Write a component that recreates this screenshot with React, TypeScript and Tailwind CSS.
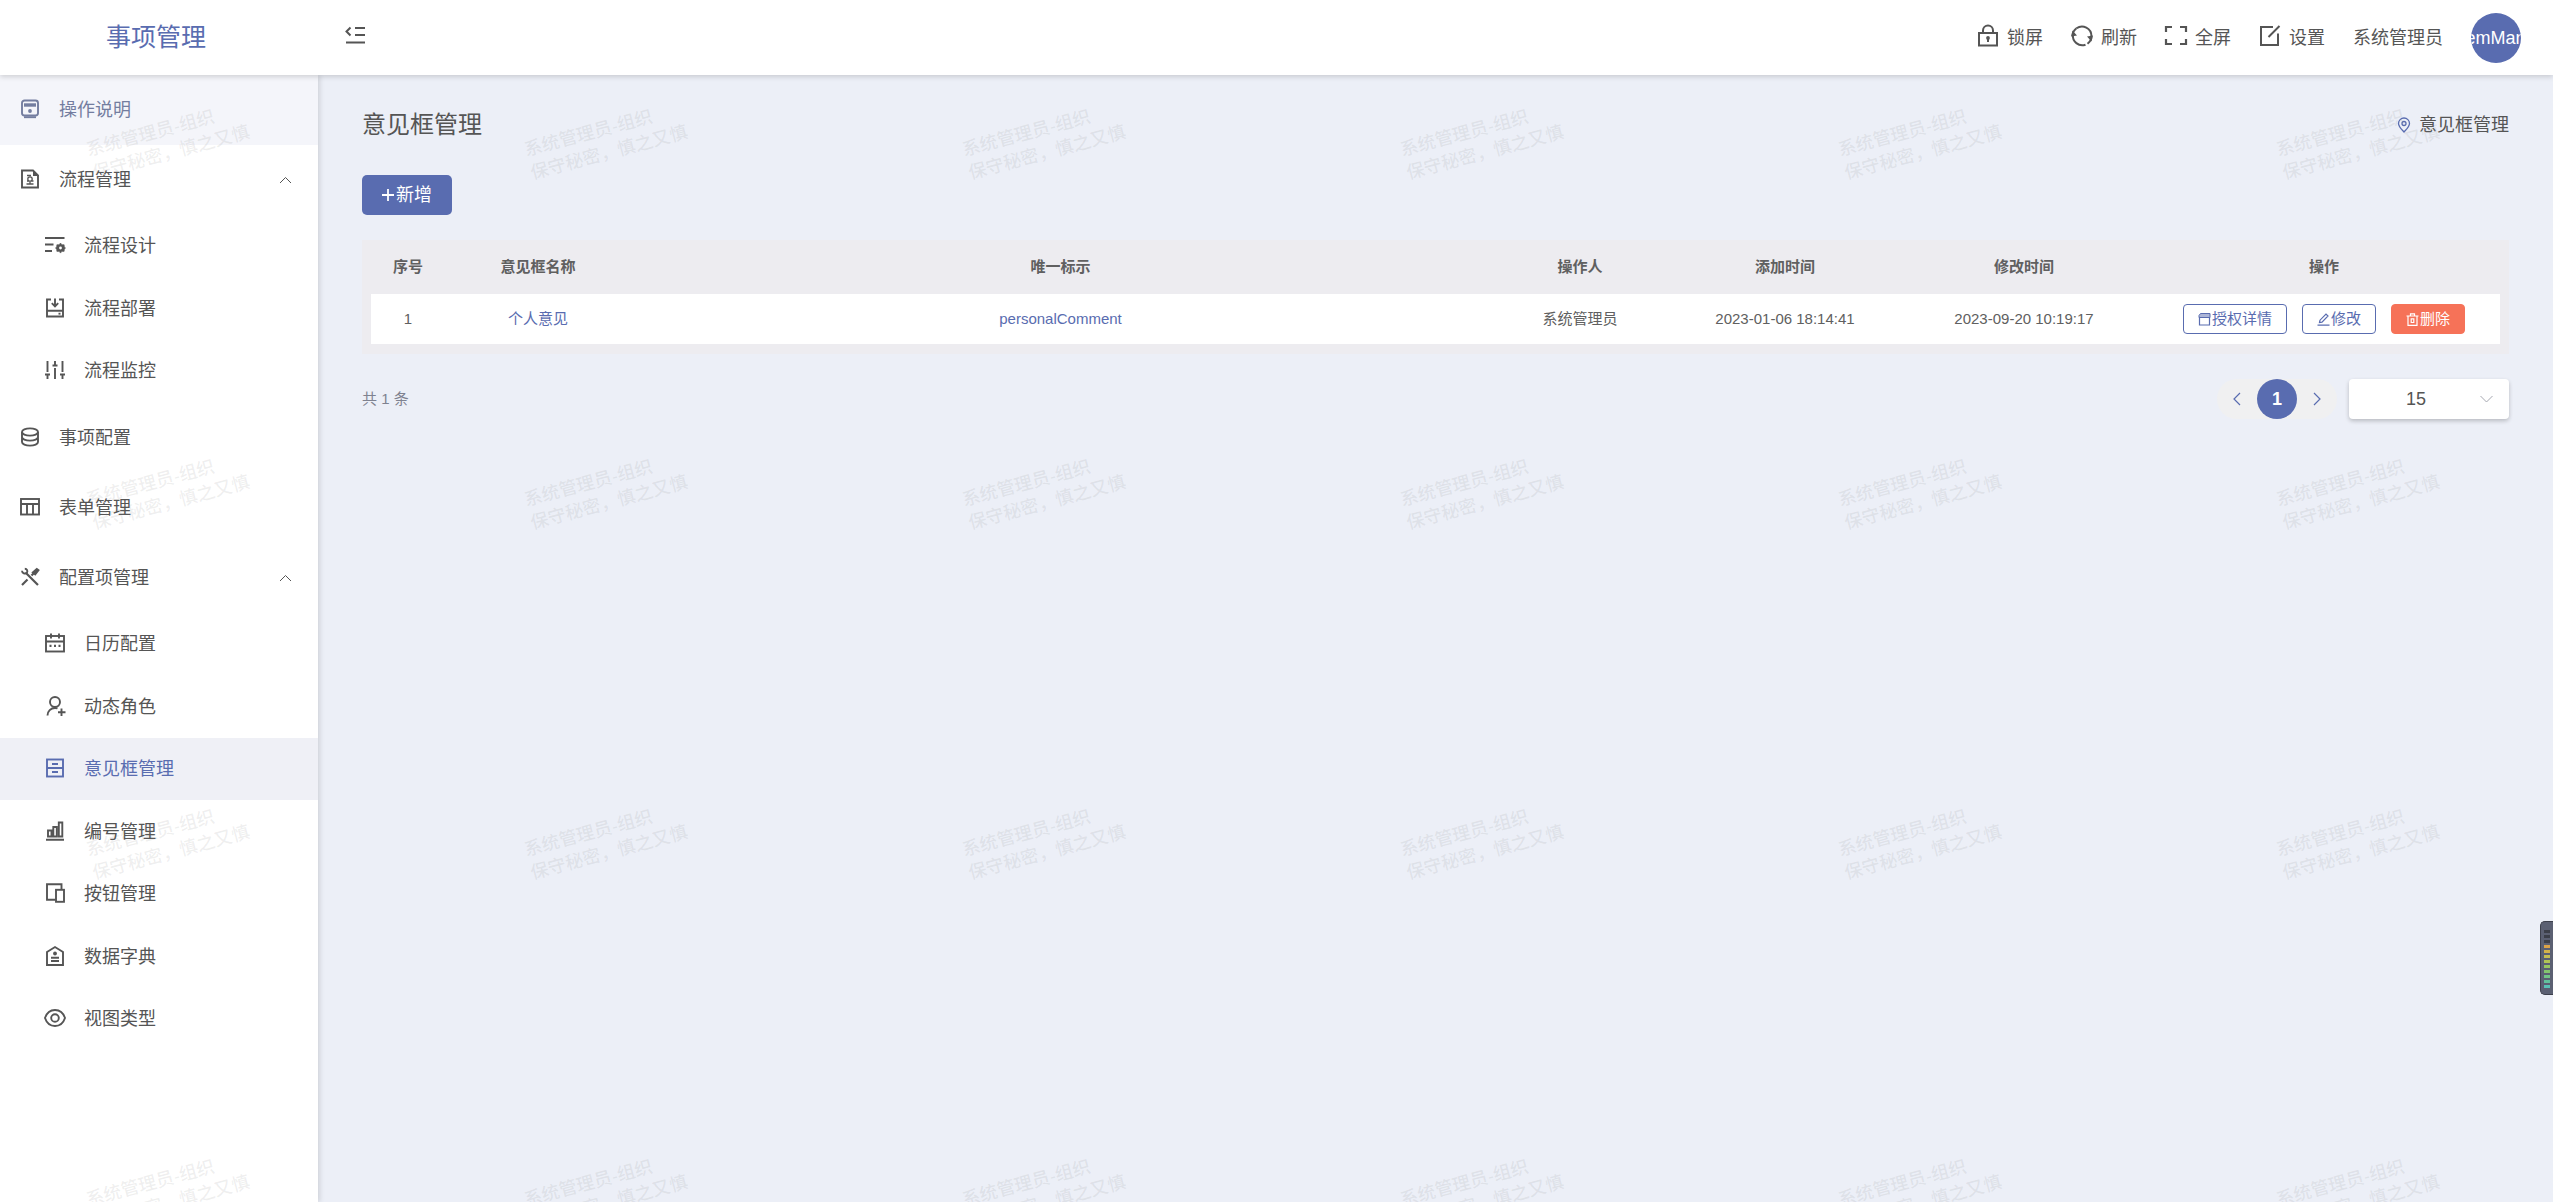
import type { ReactNode } from 'react';

const icon = (children: ReactNode) => (
  <svg
    viewBox="0 1 20 20"
    fill="none"
    stroke="currentColor"
    strokeWidth="1.9"
    aria-hidden="true"
    className="size-5 shrink-0 overflow-visible"
  >
    {children}
  </svg>
);

const icons = {
  guide: icon(
    <>
      <rect x="2" y="1.5" width="16" height="15" rx="2.5" />
      <path d="M4 6h12" strokeWidth="3.4" />
      <circle cx="10" cy="12" r="1.9" fill="currentColor" stroke="none" />
      <path d="M4 18.2h12" />
    </>,
  ),
  flow: icon(
    <>
      <path d="M13 1.5H2v17h16V6.5z" />
      <path d="M13 1v6h6z" fill="currentColor" stroke="none" />
      <path d="M7 6.5h4M6.5 15h7M10 12.5v2.5M7 12h1.5M11.5 12h2" strokeWidth="1.3" />
      <circle cx="10" cy="10" r="2.2" strokeWidth="1.3" />
    </>,
  ),
  design: icon(
    <>
      <path d="M0 3h19.5M0 9.5h8.5M0 16h7" />
      <path
        d="M15.5 8l1.4 1.8 2.2-.1.3 2.2 1.1 1.1-1.1 1.2-.3 2.2-2.2-.1-1.4 1.8-1.4-1.8-2.2.1-.3-2.2-1.1-1.2 1.1-1.1.3-2.2 2.2.1z"
        fill="currentColor"
        strokeWidth="0.6"
      />
      <circle cx="15.5" cy="13" r="1.4" fill="#fff" stroke="none" />
    </>,
  ),
  deploy: icon(
    <>
      <path d="M6 1.5H2v17h16v-17h-4M2 12.8h16" />
      <path d="M10 .5v7M6.8 5.2L10 8.4l3.2-3.2" />
      <path d="M13.5 15.7h2" />
    </>,
  ),
  monitor: icon(
    <path d="M2.5 1v11M2.5 15v4M10 8v11M10 1v4M17.5 1v11M17.5 15v4M0 14.5h5M7.5 5.5h5M15 14.5h5" />,
  ),
  database: icon(
    <>
      <ellipse cx="10" cy="5" rx="8" ry="3.6" />
      <path d="M2 5v10c0 2 3.6 3.6 8 3.6s8-1.6 8-3.6V5M2 10c0 2 3.6 3.6 8 3.6s8-1.6 8-3.6" />
    </>,
  ),
  form: icon(
    <>
      <rect x="1" y="2" width="18" height="15.5" />
      <path d="M1 7h18M7 7v10.5M13 7v10.5" />
    </>,
  ),
  tools: icon(
    <>
      <path d="M5.5 5.5L18 18" strokeWidth="2.2" />
      <path d="M2 18l5.5-5.5M11.5 8.5l2-2" strokeWidth="2.2" />
      <path d="M12.8 5.5l4-3.5 1.7 1.2-3.3 4.3z" fill="currentColor" />
      <path d="M4.8 1.8c2.3 0 3.2 2.4 2 4.2-1.8 1.2-4.7.3-4.8-2.3" />
    </>,
  ),
  calendar: icon(
    <>
      <rect x="1" y="3" width="18" height="15.5" />
      <path d="M1 8.5h18M6 .5v5M14 .5v5" />
      <path d="M4.5 12.8h2M9 12.8h2M13.5 12.8h2" strokeWidth="2.2" />
    </>,
  ),
  role: icon(
    <>
      <circle cx="10" cy="6" r="5" />
      <path d="M2.5 19.5c0-4.5 3.3-7.5 7.5-7.5 1 0 1.8.2 2.5.5M16.5 12.5v7.5M13 16.2h7.5" />
    </>,
  ),
  opinion: icon(
    <>
      <rect x="2" y="1.5" width="16" height="17" />
      <path d="M2 10h16M7 6h6M7 14h6" />
    </>,
  ),
  numbering: icon(
    <path d="M3 9.5h3.5v6H3zM8.3 6h3.5v9.5H8.3zM13.8 1.5h3.5v14h-3.5zM1 18.8h18" />,
  ),
  button: icon(
    <>
      <path d="M10.5 16.8H2V1.3h14.5v5" />
      <rect x="11" y="6.8" width="8" height="12" />
    </>,
  ),
  dictionary: icon(
    <>
      <path d="M2 6l8-5 8 5v13H2z" />
      <circle cx="10" cy="7.5" r="1.9" fill="currentColor" stroke="none" />
      <path d="M6 11.8h8M6 15h8" />
    </>,
  ),
  view: icon(
    <>
      <path d="M0 10c1.6-4.8 5.4-8 10-8s8.4 3.2 10 8c-1.6 4.8-5.4 8-10 8s-8.4-3.2-10-8z" />
      <circle cx="10" cy="10" r="3.8" />
    </>,
  ),
};

type Item = { label: string; icon: ReactNode; active?: boolean };

const processItems: Item[] = [
  { label: '流程设计', icon: icons.design },
  { label: '流程部署', icon: icons.deploy },
  { label: '流程监控', icon: icons.monitor },
];

const configItems: Item[] = [
  { label: '日历配置', icon: icons.calendar },
  { label: '动态角色', icon: icons.role },
  { label: '意见框管理', icon: icons.opinion, active: true },
  { label: '编号管理', icon: icons.numbering },
  { label: '按钮管理', icon: icons.button },
  { label: '数据字典', icon: icons.dictionary },
  { label: '视图类型', icon: icons.view },
];

function MenuLink({ item, className = '' }: { item: Item; className?: string }) {
  return (
    <li>
      <a href="#" className={`flex h-[70px] items-center gap-[19px] pl-5 ${className}`}>
        {item.icon}
        <span>{item.label}</span>
      </a>
    </li>
  );
}

function MenuGroup({ label, icon: groupIcon, items }: { label: string; icon: ReactNode; items: Item[] }) {
  return (
    <li>
      <button type="button" aria-expanded="true" className="flex h-[70px] w-full items-center gap-[19px] pr-[26px] pl-5">
        {groupIcon}
        <span className="grow text-left">{label}</span>
        <svg viewBox="0 0 13 8" className="h-2 w-[13px]" fill="none" stroke="currentColor" aria-hidden="true">
          <path d="M1 7l5.5-5.5L12 7" />
        </svg>
      </button>
      <ul className="pb-px">
        {items.map((item) => (
          <li key={item.label} className="h-[62px] even:h-[63px]">
            <a
              href="#"
              aria-current={item.active ? 'page' : undefined}
              className={`flex h-full items-center gap-[19px] pl-[45px] ${item.active ? 'bg-[#eff0f6] text-[#596cb0]' : ''}`}
            >
              {item.icon}
              <span>{item.label}</span>
            </a>
          </li>
        ))}
      </ul>
    </li>
  );
}

function HeaderAction({ label, children }: { label: string; children: ReactNode }) {
  return (
    <button type="button" className="flex items-center gap-2">
      <svg
        viewBox="0 2 22 24"
        className="h-6 w-[22px] overflow-visible"
        fill="none"
        stroke="currentColor"
        strokeWidth="2"
        aria-hidden="true"
      >
        {children}
      </svg>
      {label}
    </button>
  );
}

function Header() {
  return (
    <header className="relative z-10 flex h-[75px] items-center bg-white shadow-[0_2px_5px_rgba(0,0,0,0.15)]">
      <div className="w-[312px] text-center text-[25px] text-[#596cb0]">事项管理</div>
      <button type="button" aria-label="折叠菜单" className="ml-8">
        <svg
          viewBox="0 3 22 20"
          className="h-5 w-[22px] overflow-visible"
          fill="none"
          stroke="currentColor"
          strokeWidth="2"
          aria-hidden="true"
        >
          <path d="M6.5 2.5L2.5 6.5l4 4M11 3h10M11 10h10M2 17.5h19" />
        </svg>
      </button>
      <div className="ml-auto flex items-center gap-7 pr-8">
        <HeaderAction label="锁屏">
          <path d="M2 9h18v12.5H2zM6 9V6.5a5 5 0 0110 0V9" />
          <circle cx="11" cy="14" r="1.9" fill="currentColor" stroke="none" />
          <path d="M11 14v4" />
        </HeaderAction>
        <HeaderAction label="刷新">
          <path d="M5.5 4.3A9.4 9.4 0 0120.4 12M2 10.5A9.4 9.4 0 0014.5 20.7" />
          <path d="M5.5 4.3A9.4 9.4 0 001.6 12M16.5 19.7A9.4 9.4 0 0020.4 12" />
          <path d="M0 12.5l1.5-6L6 11.5zM22 11.5l-1.5 6L16 12.5z" fill="currentColor" stroke="none" />
        </HeaderAction>
        <HeaderAction label="全屏">
          <path d="M1 8V3h6M15 3h6v5M21 15v5h-6M7 20H1v-5" strokeWidth="2.2" />
        </HeaderAction>
        <HeaderAction label="设置">
          <path d="M14 3H2v18h17V9.5M20.5 2L9.5 13" />
        </HeaderAction>
        <span>系统管理员</span>
        <div className="flex size-[50px] items-center justify-center overflow-hidden rounded-full bg-[#596cb0] text-white">
          SystemManager
        </div>
      </div>
    </header>
  );
}

function Watermark() {
  return (
    <div
      aria-hidden="true"
      className="pointer-events-none absolute inset-0 grid auto-rows-[350px] grid-cols-[repeat(6,438px)] overflow-hidden select-none"
    >
      {Array.from({ length: 24 }, (_, i) => (
        <div key={i} className="pt-[117px] pl-[87px]">
          <div className="w-max -rotate-15 text-lg leading-6 font-medium text-[#808080]/13">
            系统管理员-组织
            <br />
            保守秘密，慎之又慎
          </div>
        </div>
      ))}
    </div>
  );
}

const smallButton = 'flex h-[30px] items-center gap-px rounded-[4px] border px-[14px]';

function OpinionTable() {
  return (
    <div className="mt-[25px] bg-[#edecf0] px-[9px] pb-[10px]">
      <table className="w-full table-fixed text-center text-[15px] text-[#606060]">
        <colgroup>
          <col className="w-[74px]" />
          <col className="w-[186px]" />
          <col />
          <col className="w-[180px]" />
          <col className="w-[230px]" />
          <col className="w-[248px]" />
          <col className="w-[352px]" />
        </colgroup>
        <thead>
          <tr className="h-[54px]">
            {['序号', '意见框名称', '唯一标示', '操作人', '添加时间', '修改时间', '操作'].map((title) => (
              <th key={title} scope="col" className="font-bold">
                {title}
              </th>
            ))}
          </tr>
        </thead>
        <tbody>
          <tr className="h-[50px] bg-white">
            <td>1</td>
            <td>
              <a href="#" className="text-[#596cb0]">个人意见</a>
            </td>
            <td>
              <a href="#" className="text-[#596cb0]">personalComment</a>
            </td>
            <td>系统管理员</td>
            <td>2023-01-06 18:14:41</td>
            <td>2023-09-20 10:19:17</td>
            <td>
              <div className="flex justify-center gap-[15px]">
                <button type="button" className={`${smallButton} border-[#596cb0] text-[#596cb0]`}>
                  <svg viewBox="0 0 13 13" className="size-[13px]" fill="none" stroke="currentColor" aria-hidden="true">
                    <path d="M1.5 4.5h10V12h-10z" strokeWidth="1.2" />
                    <path d="M1 4.5v-2L2.5.5H12v4z" fill="currentColor" fillOpacity="0.5" />
                  </svg>
                  授权详情
                </button>
                <button type="button" className={`${smallButton} border-[#596cb0] text-[#596cb0]`}>
                  <svg viewBox="0 0 13 13" className="size-[13px]" fill="none" stroke="currentColor" strokeWidth="1.2" aria-hidden="true">
                    <path d="M.5 12.2h12M2.5 9.5l.5-2.3L9 1l2 2-6 6.2z" />
                  </svg>
                  修改
                </button>
                <button type="button" className={`${smallButton} border-[#f67258] bg-[#f67258] text-white`}>
                  <svg viewBox="0 0 13 13" className="size-[13px]" fill="none" stroke="currentColor" strokeWidth="1.2" aria-hidden="true">
                    <path d="M.5 3h12M2 3v9.3h9V3M4.500 3V.8h4V3M5.200 5.800v3.700h2.600V5.800z" />
                  </svg>
                  删除
                </button>
              </div>
            </td>
          </tr>
        </tbody>
      </table>
    </div>
  );
}

function Pager() {
  return (
    <div className="mt-[25px] flex h-10 items-center">
      <span className="text-[15px] text-[#7f8290]">共 1 条</span>
      <nav aria-label="分页" className="ml-auto flex rounded-full bg-[#f0f0f1] text-[#596cb0]">
        <button type="button" aria-label="上一页" className="grid size-10 place-items-center">
          <svg viewBox="0 0 8 14" className="h-[14px] w-2" fill="none" stroke="currentColor" strokeWidth="1.2" aria-hidden="true">
            <path d="M7 1L1 7l6 6" />
          </svg>
        </button>
        <button type="button" aria-current="page" className="size-10 rounded-full bg-[#596cb0] font-bold text-white">
          1
        </button>
        <button type="button" aria-label="下一页" className="grid size-10 place-items-center">
          <svg viewBox="0 0 8 14" className="h-[14px] w-2" fill="none" stroke="currentColor" strokeWidth="1.2" aria-hidden="true">
            <path d="M1 1l6 6-6 6" />
          </svg>
        </button>
      </nav>
      <div className="relative ml-3">
        <select
          aria-label="每页条数"
          defaultValue="15"
          className="h-10 w-40 appearance-none rounded-[4px] bg-white pr-[26px] text-center [text-align-last:center] shadow-[0_2px_4px_rgba(0,0,0,0.22)]"
        >
          <option>15</option>
          <option>30</option>
          <option>50</option>
        </select>
        <svg
          viewBox="0 0 13 8"
          className="pointer-events-none absolute top-4 right-4 h-2 w-[13px] text-[#a5a7b0]"
          fill="none"
          stroke="currentColor"
          aria-hidden="true"
        >
          <path d="M.5 1l6 6 6-6" />
        </svg>
      </div>
    </div>
  );
}

function ResourceMeter() {
  return (
    <div
      aria-hidden="true"
      className="absolute top-[921px] right-0 flex w-[13px] flex-col items-center gap-0.5 rounded-l-[5px] border border-r-0 border-[#3d404c] bg-[#5b6072] pt-2 pb-[6px]"
    >
      <i className="h-[3px] w-[6px] bg-[#3c3f49]" />
      <i className="h-[3px] w-[6px] bg-[#3c3f49]" />
      <i className="h-[3px] w-[6px] bg-[#3c3f49]" />
      <i className="h-[3px] w-[6px] bg-[#dba348]" />
      <i className="h-[3px] w-[6px] bg-[#d3b24a]" />
      <i className="h-[3px] w-[6px] bg-[#c5bd52]" />
      <i className="h-[3px] w-[6px] bg-[#b0c355]" />
      <i className="h-[3px] w-[6px] bg-[#97c560]" />
      <i className="h-[3px] w-[6px] bg-[#84c46e]" />
      <i className="h-[3px] w-[6px] bg-[#72c486]" />
      <i className="h-[3px] w-[6px] bg-[#62c29b]" />
      <i className="h-[3px] w-[6px] bg-[#5ac2b4]" />
    </div>
  );
}

export default function App() {
  return (
    <div className="relative flex min-h-screen flex-col overflow-hidden bg-[#eceff7] font-['Liberation_Sans','Noto_Sans_CJK_SC',sans-serif] text-lg text-[#555]">
      <Header />
      <div className="flex grow">
        <aside className="w-[318px] shrink-0 bg-white shadow-[2px_0_5px_rgba(0,0,0,0.12)]">
          <nav aria-label="主菜单">
            <ul>
              <MenuLink item={{ label: '操作说明', icon: icons.guide }} className="bg-[#f4f5fa] text-[#737d9f]" />
              <MenuGroup label="流程管理" icon={icons.flow} items={processItems} />
              <MenuLink item={{ label: '事项配置', icon: icons.database }} />
              <MenuLink item={{ label: '表单管理', icon: icons.form }} />
              <MenuGroup label="配置项管理" icon={icons.tools} items={configItems} />
            </ul>
          </nav>
        </aside>
        <main className="min-w-0 grow px-11 pt-[30px]">
          <div className="flex h-10 items-center justify-between">
            <h1 className="text-2xl">意见框管理</h1>
            <div className="flex items-center gap-2">
              <svg viewBox="0 0 14 16" className="h-4 w-[14px] text-[#596cb0]" fill="none" stroke="currentColor" strokeWidth="1.3" aria-hidden="true">
                <path d="M7 15C4 11.8 1.5 9.5 1.5 6.5a5.5 5.5 0 0111 0C12.5 9.5 10 11.8 7 15z" />
                <circle cx="7" cy="6.5" r="2" />
              </svg>
              意见框管理
            </div>
          </div>
          <button type="button" className="mt-[30px] flex h-10 items-center gap-0.5 rounded-[5px] bg-[#596cb0] px-5 text-white">
            <svg viewBox="0 0 12 12" className="size-3" stroke="currentColor" strokeWidth="1.8" aria-hidden="true">
              <path d="M6 0v12M0 6h12" />
            </svg>
            新增
          </button>
          <OpinionTable />
          <Pager />
        </main>
      </div>
      <Watermark />
      <ResourceMeter />
    </div>
  );
}
